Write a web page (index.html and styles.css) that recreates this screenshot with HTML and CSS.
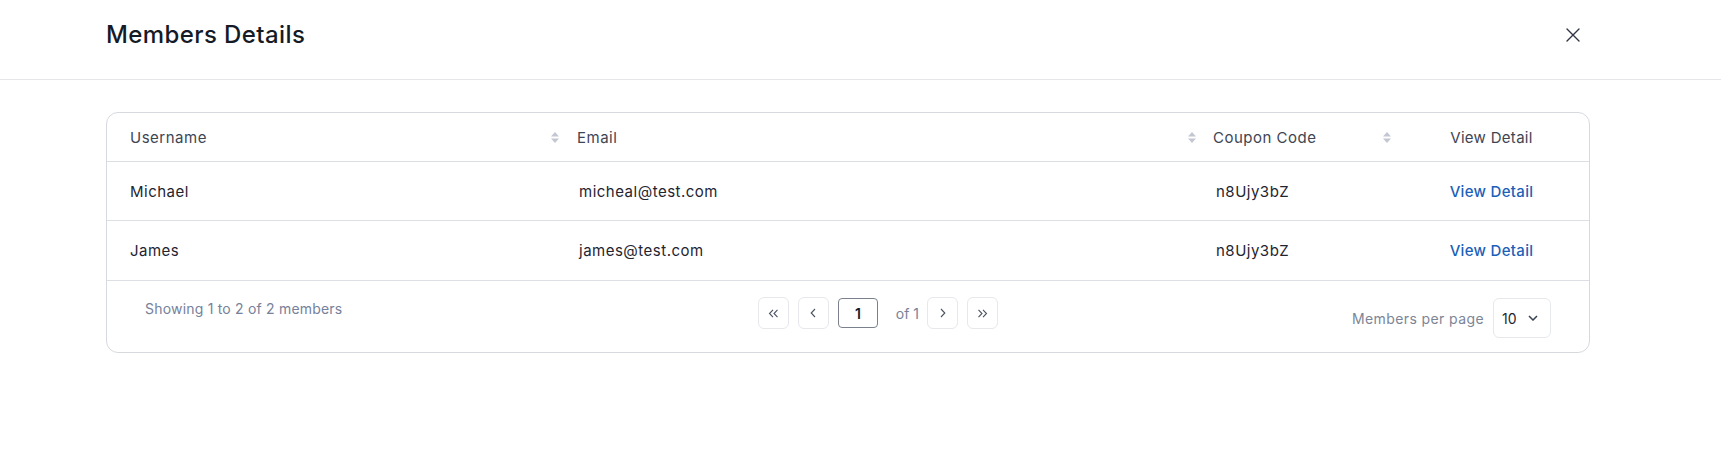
FILE: index.html
```html
<!DOCTYPE html>
<html lang="en">
<head>
<meta charset="utf-8">
<title>Members Details</title>
<link rel="stylesheet" href="styles.css">
</head>
<body>
<div class="modal">
  <header class="modal-header">
    <h1 class="modal-title">Members Details</h1>
    <button class="close-btn" aria-label="Close">
      <svg width="14" height="14" viewBox="0 0 14 14"><path d="M1 1L13 13M13 1L1 13" stroke="#2f3542" stroke-width="1.4" fill="none" stroke-linecap="round"/></svg>
    </button>
  </header>
  <main class="modal-body">
    <div class="table">
      <div class="row row-head">
        <div class="th c1"><span>Username</span><svg class="sort" width="8" height="11" viewBox="0 0 8 11"><path d="M4 0L8 4.5H0Z M0 6.5H8L4 11Z" fill="#c3c7d1"/></svg></div>
        <div class="th c2"><span>Email</span><svg class="sort" width="8" height="11" viewBox="0 0 8 11"><path d="M4 0L8 4.5H0Z M0 6.5H8L4 11Z" fill="#c3c7d1"/></svg></div>
        <div class="th c3"><span>Coupon Code</span><svg class="sort" width="8" height="11" viewBox="0 0 8 11"><path d="M4 0L8 4.5H0Z M0 6.5H8L4 11Z" fill="#c3c7d1"/></svg></div>
        <div class="th c4"><span>View Detail</span></div>
      </div>
      <div class="row row-data">
        <div class="td c1">Michael</div>
        <div class="td c2">micheal@test.com</div>
        <div class="td c3">n8Ujy3bZ</div>
        <div class="td c4"><a class="link" href="#">View Detail</a></div>
      </div>
      <div class="row row-data">
        <div class="td c1">James</div>
        <div class="td c2">james@test.com</div>
        <div class="td c3">n8Ujy3bZ</div>
        <div class="td c4"><a class="link" href="#">View Detail</a></div>
      </div>
      <div class="footer">
        <div class="showing">Showing 1 to 2 of 2 members</div>
        <div class="pager">
          <button class="pg-btn" aria-label="First"><svg width="11" height="9" viewBox="0 0 11 9"><path d="M5 0.8L1.5 4.5L5 8.2M9.5 0.8L6 4.5L9.5 8.2" stroke="#4b5260" stroke-width="1.1" fill="none"/></svg></button>
          <button class="pg-btn" aria-label="Previous"><svg width="6" height="10" viewBox="0 0 6 10"><path d="M5 1L1.2 5L5 9" stroke="#4b5260" stroke-width="1.1" fill="none"/></svg></button>
          <div class="pg-input">1</div>
          <span class="of">of 1</span>
          <button class="pg-btn" aria-label="Next"><svg width="6" height="10" viewBox="0 0 6 10"><path d="M1 1L4.8 5L1 9" stroke="#4b5260" stroke-width="1.1" fill="none"/></svg></button>
          <button class="pg-btn" aria-label="Last"><svg width="11" height="9" viewBox="0 0 11 9"><path d="M1.5 0.8L5 4.5L1.5 8.2M6 0.8L9.5 4.5L6 8.2" stroke="#4b5260" stroke-width="1.1" fill="none"/></svg></button>
        </div>
        <div class="per-page">
          <span class="per-label">Members per page</span>
          <div class="select"><span>10</span><svg width="10" height="6" viewBox="0 0 10 6"><path d="M1 1L5 5L9 1" stroke="#374151" stroke-width="1.5" fill="none"/></svg></div>
        </div>
      </div>
    </div>
  </main>
</div>
</body>
</html>
```
FILE: styles.css
```css
* { box-sizing: border-box; }
body {
  margin: 0;
  background: #fff;
  color: #1f2430;
  font-family: Inter, "Liberation Sans", sans-serif;
}
.modal-header {
  display: flex;
  align-items: center;
  justify-content: space-between;
  height: 80px;
  padding: 19px 136px 28px 106px;
  border-bottom: 1px solid #e4e6ea;
}
.modal-title {
  margin: 0;
  font-size: 24px;
  line-height: 32px;
  font-weight: 500;
  letter-spacing: 0.4px;
  color: #151b26;
}
.close-btn {
  width: 24px;
  height: 24px;
  padding: 0;
  border: 0;
  background: none;
  display: flex;
  align-items: center;
  justify-content: center;
}
.modal-body {
  padding: 32px 131px 0 106px;
}
.table {
  border: 1px solid #d6d9de;
  border-radius: 12px;
  overflow: hidden;
}
.row {
  display: grid;
  grid-template-columns: 459px 637px 191px 1fr;
  border-bottom: 1px solid #dcdfe3;
}
.row-head { height: 49px; }
.row-data { height: 59px; }
.row-data + .row-data { height: 60px; }
.th, .td {
  display: flex;
  align-items: center;
  font-size: 15px;
  letter-spacing: 0.5px;
}
.th {
  justify-content: space-between;
  color: #3e4553;
}
.th.c1 { padding: 0 7px 0 23px; }
.th.c2 { padding: 0 7px 0 11px; }
.th.c3 { padding: 0 3px 0 10px; }
.th.c4, .td.c4 { justify-content: center; }
.th.c4 { letter-spacing: 0.3px; }
.td { color: #1f2430; }
.td.c1 { padding-left: 23px; }
.td.c2 { padding-left: 13px; }
.td.c3 { padding-left: 13px; }
.link {
  color: #1a5fb8;
  font-weight: 500;
  letter-spacing: 0.3px;
  text-decoration: none;
}
.footer {
  display: flex;
  justify-content: space-between;
  align-items: flex-start;
  height: 71px;
  padding: 16px 38px 0 38px;
}
.showing {
  width: 262px;
  font-size: 14px;
  line-height: 24px;
  letter-spacing: 0.2px;
  color: #76819a;
}
.pager {
  display: flex;
  align-items: center;
  height: 32px;
  margin-left: -3px;
}
.pg-btn {
  width: 31px;
  height: 32px;
  padding: 0;
  margin-right: 9px;
  border: 1px solid #e6e8ec;
  border-radius: 6px;
  background: #fff;
  display: flex;
  align-items: center;
  justify-content: center;
}
.pg-btn:last-child { margin-right: 0; }
.pg-input {
  width: 40px;
  height: 30px;
  border: 1px solid #7b818c;
  border-radius: 4px;
  display: flex;
  align-items: center;
  justify-content: center;
  font-size: 14px;
  font-weight: 600;
  color: #111827;
  margin-right: 18px;
}
.of {
  font-size: 14px;
  color: #76819a;
  margin-right: 8px;
}
.per-page {
  display: flex;
  align-items: center;
  gap: 9px;
  margin-top: 1px;
}
.per-label {
  font-size: 14px;
  letter-spacing: 0.4px;
  color: #7c8597;
}
.select {
  width: 58px;
  height: 40px;
  border: 1px solid #e6e8ec;
  border-radius: 6px;
  display: flex;
  align-items: center;
  justify-content: space-between;
  padding: 0 12px 0 8px;
  font-size: 14px;
  color: #1f2430;
}
```
